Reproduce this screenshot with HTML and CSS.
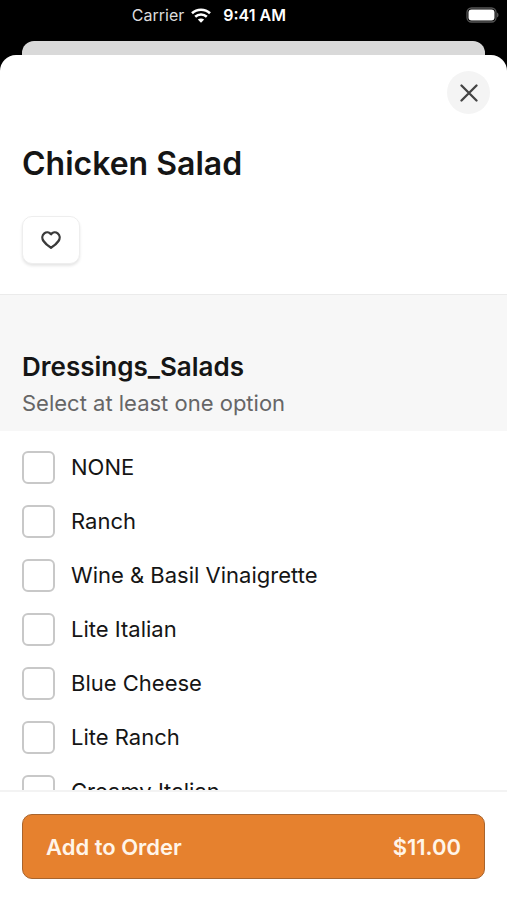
FILE: index.html
```html
<!DOCTYPE html>
<html lang="en">
<head>
  <meta charset="UTF-8">
  <meta name="viewport" content="width=device-width, initial-scale=1.0">
  <title>Chicken Salad</title>
  <link rel="stylesheet" href="styles.css">
</head>
<body>
  <div class="status-bar">
    <div class="status-left">
      <span class="carrier">Carrier</span>
      <svg class="wifi" width="20" height="15" viewBox="0 0 20 15" fill="none" stroke="#fff" stroke-width="2.6">
        <path d="M1 5.3C6 .5 14 .5 19 5.3" />
        <path d="M4.2 8.8c3.3-3 8.3-3 11.6 0" />
        <path d="M10 14.8 6.8 11.6c1.8-1.6 4.6-1.6 6.4 0z" fill="#fff" stroke="none" />
      </svg>
      <span class="time">9:41 AM</span>
    </div>
    <svg class="battery" width="33" height="16" viewBox="0 0 33 16">
      <rect x="1" y="1" width="29" height="14" rx="4.5" fill="none" stroke="#555" stroke-width="1.3" />
      <rect x="2.5" y="2.5" width="26" height="11" rx="3" fill="#fff" />
      <path d="M31 5.5c2 .8 2 4.2 0 5z" fill="#555" />
    </svg>
  </div>

  <div class="back-sheet"></div>

  <main class="sheet">
    <div class="scroll">
      <header class="item-header">
        <button class="close" type="button" aria-label="Close">
          <svg width="18" height="18" viewBox="0 0 18 18" fill="none" stroke="#444" stroke-width="2.3" stroke-linecap="round">
            <path d="M1.5 1.5l15 15M16.5 1.5l-15 15" />
          </svg>
        </button>
        <h1>Chicken Salad</h1>
        <button class="favorite" type="button" aria-label="Favorite">
          <svg width="20" height="18" viewBox="0 0 20 18" fill="none" stroke="#3a3a3a" stroke-width="2.3" stroke-linejoin="round">
            <path d="M10 3.2C8.400 1.1 5.4.7 3.3 2.3 1 4.2.8 7.6 2.500 10c1.7 2.5 4.5 4.9 7.5 6.8 3-1.9 5.8-4.3 7.5-6.8 1.7-2.4 1.5-5.8-.8-7.7-2.1-1.6-5.1-1.2-6.7.9z" />
          </svg>
        </button>
      </header>

      <section>
        <div class="group-header">
          <h2>Dressings_Salads</h2>
          <p>Select at least one option</p>
        </div>
        <div class="options">
          <label class="option"><input type="checkbox" name="dressing"><span>NONE</span></label>
          <label class="option"><input type="checkbox" name="dressing"><span>Ranch</span></label>
          <label class="option"><input type="checkbox" name="dressing"><span>Wine &amp; Basil Vinaigrette</span></label>
          <label class="option"><input type="checkbox" name="dressing"><span>Lite Italian</span></label>
          <label class="option"><input type="checkbox" name="dressing"><span>Blue Cheese</span></label>
          <label class="option"><input type="checkbox" name="dressing"><span>Lite Ranch</span></label>
          <label class="option"><input type="checkbox" name="dressing"><span>Creamy Italian</span></label>
        </div>
      </section>
    </div>

    <footer class="footer">
      <button class="add" type="button">
        <span>Add to Order</span>
        <span>$11.00</span>
      </button>
    </footer>
  </main>
</body>
</html>
```
FILE: styles.css
```css
* {
  box-sizing: border-box;
}

body {
  margin: 0;
  height: 100vh;
  display: flex;
  flex-direction: column;
  background: #000;
  color: #151515;
  font-family: Inter, "Liberation Sans", sans-serif;
  overflow: hidden;
}

h1, h2, p {
  margin: 0;
}

button {
  font-family: inherit;
  cursor: pointer;
}

/* Status bar */
.status-bar {
  display: flex;
  justify-content: space-between;
  align-items: center;
  height: 30px;
  padding: 0 8px 0 26%;
  color: #fff;
  font-size: 16px;
}

.status-left {
  display: flex;
  align-items: center;
}

.carrier {
  color: #ddd;
}

.wifi {
  margin: 0 12px 0 7px;
}

.time {
  font-weight: 600;
}

/* Sheet stacked behind the open one */
.back-sheet {
  height: 14px;
  margin: 11px 22px 0;
  background: #d9d9d9;
  border-radius: 12px 12px 0 0;
}

.sheet {
  flex: 1;
  min-height: 0;
  display: flex;
  flex-direction: column;
  background: #fff;
  border-radius: 16px 16px 0 0;
  overflow: hidden;
}

.scroll {
  flex: 1;
  min-height: 0;
  overflow-y: auto;
  scrollbar-width: none;
}

.item-header {
  display: flex;
  flex-direction: column;
  align-items: flex-start;
  padding: 16px 17px 30px 22px;
  border-bottom: 1px solid #ebebeb;
}

.close {
  display: flex;
  align-items: center;
  justify-content: center;
  align-self: flex-end;
  width: 43px;
  height: 43px;
  padding: 0;
  border: none;
  border-radius: 50%;
  background: #f4f4f4;
}

h1 {
  margin: 30px 0 32px;
  font-size: 32px;
  line-height: 40px;
  font-weight: 600;
}

.favorite {
  display: flex;
  align-items: center;
  justify-content: center;
  width: 58px;
  height: 48px;
  padding: 0;
  border: 1px solid #eee;
  border-radius: 10px;
  background: #fff;
  box-shadow: 0 2px 3px rgba(0, 0, 0, 0.1);
}

/* Options */
.group-header {
  padding: 54px 22px 10px;
  background: #f7f7f7;
}

h2 {
  font-size: 26px;
  line-height: 36px;
  font-weight: 600;
}

.group-header p {
  color: #666;
  font-size: 22px;
  line-height: 36px;
}

.options {
  padding: 9px 22px;
}

.option {
  display: flex;
  align-items: center;
  gap: 16px;
  height: 54px;
  font-size: 22px;
  cursor: pointer;
}

.option input {
  appearance: none;
  width: 33px;
  height: 33px;
  margin: 0;
  border: 2px solid #c8c8c8;
  border-radius: 6px;
  background: #fff;
}

.option input:checked {
  border-color: #e6812e;
  background: #e6812e;
}

/* Footer */
.footer {
  padding: 22px 22px 21px;
  border-top: 2px solid #f3f3f3;
  background: #fff;
}

.add {
  display: flex;
  justify-content: space-between;
  align-items: center;
  width: 100%;
  height: 65px;
  padding: 0 23px;
  border: 1px solid #a8642d;
  border-radius: 10px;
  background: #e6812e;
  color: #fff5e9;
  font-size: 22px;
  font-weight: 600;
}
```
